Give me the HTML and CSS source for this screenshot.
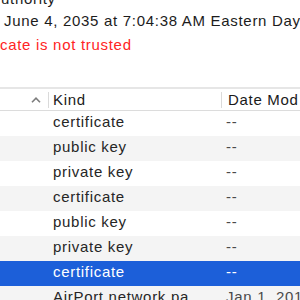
FILE: index.html
```html
<!DOCTYPE html>
<html lang="en">
  <head>
    <meta charset="UTF-8" />
    <title>Keychain Access - Certificates</title>
    <link rel="stylesheet" href="styles.css">
  </head>
  <body>
    <div class="details">
      <div class="line">uthority</div>
      <div class="line">June 4, 2035 at 7:04:38 AM Eastern Day</div>
      <div class="line warning">cate is not trusted</div>
    </div>

    <div class="list">
      <div class="list-header">
        <div class="col col-name">
          <svg class="sort" width="10" height="6" viewBox="0 0 10 6">
            <path d="M1 5.2 L5 1.2 L9 5.2" fill="none" stroke="#7d7d7d" stroke-width="1.6" />
          </svg>
        </div>
        <div class="col col-kind">Kind</div>
        <div class="col col-date">Date Mod</div>
      </div>

      <div class="row"><div></div><div class="kind">certificate</div><div class="date">--</div></div>
      <div class="row alt"><div></div><div class="kind">public key</div><div class="date">--</div></div>
      <div class="row"><div></div><div class="kind">private key</div><div class="date">--</div></div>
      <div class="row alt"><div></div><div class="kind">certificate</div><div class="date">--</div></div>
      <div class="row"><div></div><div class="kind">public key</div><div class="date">--</div></div>
      <div class="row alt"><div></div><div class="kind">private key</div><div class="date">--</div></div>
      <div class="row selected"><div></div><div class="kind">certificate</div><div class="date">--</div></div>
      <div class="row alt"><div></div><div class="kind">AirPort network pa</div><div class="date">Jan 1, 201</div></div>
    </div>
  </body>
</html>
```

FILE: styles.css
```css
body {
  margin: 0;
  width: 300px;
  height: 300px;
  overflow: hidden;
  background: #ffffff;
  font-family: "Liberation Sans", Arial, sans-serif;
  font-size: 15px;
  letter-spacing: 0.7px;
  color: #1c1c1c;
}
.details {
  margin-top: -12px;
}
.line {
  line-height: 22px;
  white-space: nowrap;
}
.line:first-child {
  padding-left: 1px;
}
.line:nth-child(2) {
  padding-left: 4px;
}
.warning {
  margin-top: 2px;
  color: #ff2424;
}
.list {
  margin-top: 31px;
  border-top: 2px solid #e6e6e6;
}
.list-header,
.row {
  display: grid;
  grid-template-columns: 48px 173px 1fr;
  white-space: nowrap;
}
.list-header {
  height: 21px;
  align-items: center;
  border-bottom: 1px solid #dcdcdc;
  color: #1a1a1a;
}
.col {
  height: 16px;
  line-height: 16px;
  overflow: hidden;
}
.col-name {
  display: flex;
  justify-content: flex-end;
  align-items: center;
  padding-right: 7px;
}
.col-kind {
  border-left: 1px solid #dadada;
  padding-left: 4px;
}
.col-date {
  border-left: 1px solid #dadada;
  padding-left: 6px;
}
.row {
  height: 25px;
  line-height: 22px;
  color: #262626;
}
.row.alt {
  background: #f4f4f4;
}
.row.selected {
  background: #1c5fd9;
  color: #ffffff;
}
.kind {
  padding-left: 5px;
  overflow: hidden;
}
.date {
  padding-left: 5px;
  overflow: hidden;
}
.row .date {
  color: #4a4a4a;
}
.row.selected .date {
  color: #ffffff;
}
```
